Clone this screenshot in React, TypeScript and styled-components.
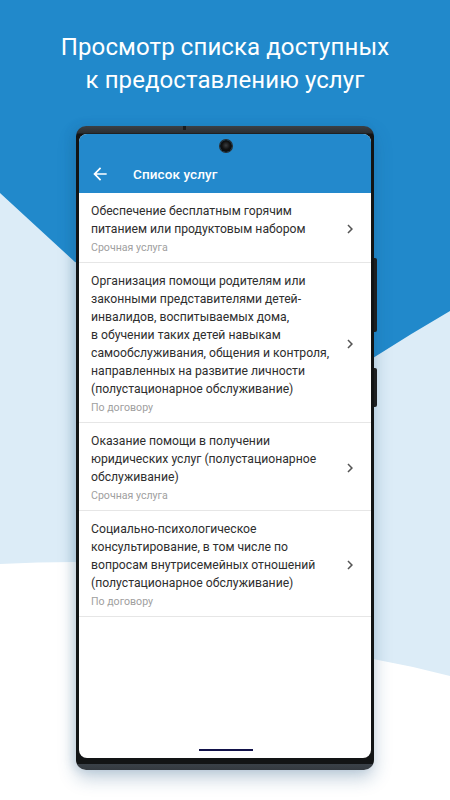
import React from 'react'
import styled, {createGlobalStyle} from 'styled-components'

const GlobalStyle = createGlobalStyle`
  html, body {
    margin: 0;
    padding: 0;
    background: #ffffff;
  }
  * {
    box-sizing: border-box;
  }
`

const PageWrapper = styled.div`
  position: relative;
  width: 450px;
  height: 800px;
  overflow: hidden;
  font-family: Roboto, 'Noto Sans', sans-serif;
  display: flex;
  flex-direction: column;
  align-items: center;
`

const Backdrop = styled.svg`
  position: absolute;
  inset: 0;
  z-index: 0;
`

const Heading = styled.h1`
  position: relative;
  z-index: 1;
  margin: 0;
  padding-top: 31px;
  font-size: 24px;
  line-height: 33px;
  font-weight: 400;
  color: #ffffff;
  text-align: center;
  letter-spacing: 0.1px;
`

const Phone = styled.div`
  position: relative;
  z-index: 1;
  margin-top: 29px;
  width: 298px;
  height: 644px;
  padding: 8px 3px 12px 3px;
  border-radius: 10px;
  background: linear-gradient(
    to bottom,
    #3b4045 0px,
    #2a2e32 7px,
    #121415 8px,
    #121415 calc(100% - 6px),
    #3a4148 calc(100% - 6px),
    #343a40 100%
  );
  box-shadow: 0 8px 18px rgba(25, 80, 125, 0.28), -4px 0 10px rgba(25, 80, 125, 0.12);
`

const TopSlit = styled.div`
  position: absolute;
  top: 0;
  left: 107px;
  width: 3px;
  height: 4px;
  background: #1a1c1e;
`

const SideButton = styled.div<{$top: number; $height: number}>`
  position: absolute;
  right: -3px;
  top: ${p => p.$top}px;
  width: 3px;
  height: ${p => p.$height}px;
  border-radius: 0 2px 2px 0;
  background: #1d1f21;
`

const Screen = styled.div`
  position: relative;
  height: 100%;
  border-radius: 8px;
  overflow: hidden;
  background: #ffffff;
  display: flex;
  flex-direction: column;
`

const Camera = styled.div`
  position: absolute;
  top: 6px;
  left: 141px;
  width: 12px;
  height: 12px;
  border-radius: 50%;
  background: radial-gradient(circle at 50% 45%, #3a3d40 0, #111 45%, #050505 100%);
  box-shadow: 0 0 0 1px #2a2c2e;
`

const AppBar = styled.div`
  background: #2389cc;
  padding-top: 20px;
  height: 59px;
`

const Toolbar = styled.div`
  height: 39px;
  display: flex;
  align-items: center;
  padding-left: 11px;
`

const BackButton = styled.div`
  width: 20px;
  height: 20px;
  display: flex;
  align-items: center;
  justify-content: center;
  color: #ffffff;
`

const Title = styled.div`
  margin-left: 23px;
  font-size: 13.5px;
  font-weight: 500;
  color: #ffffff;
  letter-spacing: 0.1px;
`

const List = styled.div`
  flex: 1;
  display: flex;
  flex-direction: column;
`

const Row = styled.div`
  display: flex;
  align-items: center;
  padding: 9px 12px 6px 12px;
  border-bottom: 1px solid #e6e6e6;
`

const RowText = styled.div`
  flex: 1;
  display: flex;
  flex-direction: column;
`

const RowTitle = styled.div`
  font-size: 12.2px;
  line-height: 18px;
  color: #2e2e2e;
  white-space: pre;
`

const RowNote = styled.div`
  margin-top: 2px;
  font-size: 10.6px;
  line-height: 16px;
  color: #a0a0a0;
`

const Chevron = styled.div`
  width: 18px;
  height: 18px;
  display: flex;
  align-items: center;
  justify-content: center;
  color: #555;
`

const Spacer = styled.div`
  flex: 1;
`

const HomeBar = styled.div`
  align-self: center;
  width: 54px;
  height: 2px;
  margin-bottom: 7px;
  margin-left: 2px;
  background: #12124a;
`

interface Service {
  title: string
  note: string
}

const services: Service[] = [
  {
    title: 'Обеспечение бесплатным горячим\nпитанием или продуктовым набором',
    note: 'Срочная услуга',
  },
  {
    title:
      'Организация помощи родителям или\nзаконными представителями детей-\nинвалидов, воспитываемых дома,\nв обучении таких детей навыкам\nсамообслуживания, общения и контроля,\nнаправленных на развитие личности\n(полустационарное обслуживание)',
    note: 'По договору',
  },
  {
    title: 'Оказание помощи в получении\nюридических услуг (полустационарное\nобслуживание)',
    note: 'Срочная услуга',
  },
  {
    title:
      'Социально-психологическое\nконсультирование, в том числе по\nвопросам внутрисемейных отношений\n(полустационарное обслуживание)',
    note: 'По договору',
  },
]

const ArrowBack = () => (
  <svg width="20" height="20" viewBox="0 0 24 24" fill="currentColor">
    <path d="M20 11H7.83l5.59-5.59L12 4l-8 8 8 8 1.41-1.41L7.83 13H20v-2z" />
  </svg>
)

const ChevronRight = () => (
  <svg width="18" height="18" viewBox="0 0 24 24" fill="currentColor">
    <path d="M10 6 8.59 7.41 13.17 12l-4.58 4.59L10 18l6-6z" />
  </svg>
)

const ServiceRow = ({title, note}: Service) => (
  <Row>
    <RowText>
      <RowTitle>{title}</RowTitle>
      <RowNote>{note}</RowNote>
    </RowText>
    <Chevron>
      <ChevronRight />
    </Chevron>
  </Row>
)

function App() {
  return (
    <PageWrapper>
      <GlobalStyle />
      <Backdrop width="450" height="800" viewBox="0 0 450 800">
        <rect width="450" height="800" fill="#ffffff" />
        <path d="M0,0 H450 V676 Q412,666 373,659 L75,562 Q38,562 0,564 Z" fill="#dcecf7" />
        <path d="M0,0 H450 V311 Q412,333 373,358 L75,262 Q38,228 0,193 Z" fill="#2189cb" />
      </Backdrop>
      <Heading>
        Просмотр списка доступных
        <br />к предоставлению услуг
      </Heading>
      <Phone>
        <TopSlit />
        <SideButton $top={132} $height={74} />
        <SideButton $top={242} $height={39} />
        <Screen>
          <Camera />
          <AppBar>
            <Toolbar>
              <BackButton>
                <ArrowBack />
              </BackButton>
              <Title>Список услуг</Title>
            </Toolbar>
          </AppBar>
          <List>
            {services.map(s => (
              <ServiceRow key={s.title} {...s} />
            ))}
            <Spacer />
            <HomeBar />
          </List>
        </Screen>
      </Phone>
    </PageWrapper>
  )
}

export default App
